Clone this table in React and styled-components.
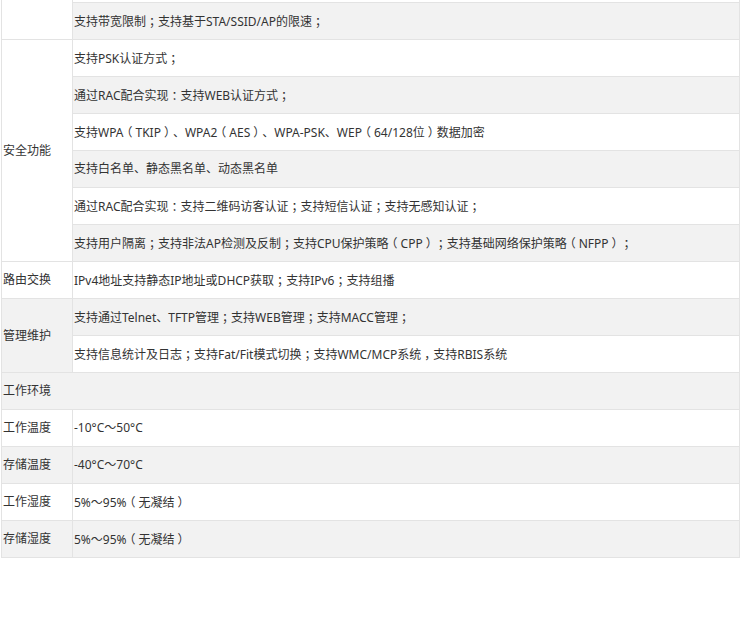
import React from 'react';
import styled, { createGlobalStyle } from 'styled-components';

const Global = createGlobalStyle`
  html, body {
    margin: 0;
    padding: 0;
    background: #fff;
  }
`;

const Page = styled.div`
  padding-left: 1px;
  width: 739px;
`;

const Table = styled.table`
  border-collapse: collapse;
  table-layout: fixed;
  width: 739px;
  font-family: "Noto Sans", "Noto Sans CJK SC", sans-serif;
  font-size: 12px;
  color: #333;
`;

const Row = styled.tr`
  background: ${p => (p.$shade ? '#f2f2f2' : '#fff')};
`;

const Cell = styled.td`
  border: 1px solid #e3e3e3;
  height: 36px;
  padding: 0 1px;
  vertical-align: middle;
  text-align: left;
  white-space: nowrap;
  line-height: 18px;
`;

// the strip of the row above that is scrolled off the top
const TopCell = styled(Cell)`
  border-top: none;
  height: ${p => (p.$thin ? '2px' : 'auto')};
  line-height: 0;
  font-size: 0;
`;

// full-width punctuation sits centred in its em box
const Punct = styled.span`
  display: inline-block;
  width: 1em;
  text-align: center;
  font-family: "Noto Sans CJK SC", sans-serif;
  font-feature-settings: "halt";
`;

function renderText(text) {
  return text.split(/([；：，（）])/).map((part, i) =>
    /^[；：，（）]$/.test(part) ? <Punct key={i}>{part}</Punct> : part
  );
}

const sections = [
  {
    label: '安全功能',
    items: [
      '支持PSK认证方式；',
      '通过RAC配合实现：支持WEB认证方式；',
      '支持WPA（TKIP）、WPA2（AES）、WPA-PSK、WEP（64/128位）数据加密',
      '支持白名单、静态黑名单、动态黑名单',
      '通过RAC配合实现：支持二维码访客认证；支持短信认证；支持无感知认证；',
      '支持用户隔离；支持非法AP检测及反制；支持CPU保护策略（CPP）；支持基础网络保护策略（NFPP）；',
    ],
  },
  { label: '路由交换', items: ['IPv4地址支持静态IP地址或DHCP获取；支持IPv6；支持组播'] },
  {
    label: '管理维护',
    items: [
      '支持通过Telnet、TFTP管理；支持WEB管理；支持MACC管理；',
      '支持信息统计及日志；支持Fat/Fit模式切换；支持WMC/MCP系统，支持RBIS系统',
    ],
  },
  { label: '工作环境', heading: true },
  { label: '工作温度', items: ['-10°C～50°C'] },
  { label: '存储温度', items: ['-40°C～70°C'] },
  { label: '工作湿度', items: ['5%～95%（无凝结）'] },
  { label: '存储湿度', items: ['5%～95%（无凝结）'] },
];

function buildRows() {
  const rows = [];
  let n = 2; // two rows of the previous section sit above
  sections.forEach(sec => {
    if (sec.heading) {
      rows.push(
        <Row key={sec.label} $shade={n % 2 === 1}>
          <Cell colSpan={2}>{sec.label}</Cell>
        </Row>
      );
      n++;
      return;
    }
    sec.items.forEach((text, i) => {
      rows.push(
        <Row key={sec.label + i} $shade={n % 2 === 1}>
          {i === 0 && <Cell rowSpan={sec.items.length}>{sec.label}</Cell>}
          <Cell>{renderText(text)}</Cell>
        </Row>
      );
      n++;
    });
  });
  return rows;
}

export default function App() {
  return (
    <Page>
      <Global />
      <Table>
        <colgroup>
          <col style={{ width: 71 }} />
          <col />
        </colgroup>
        <tbody>
          <Row>
            <TopCell rowSpan={2} />
            <TopCell $thin />
          </Row>
          <Row $shade>
            <Cell>{renderText('支持带宽限制；支持基于STA/SSID/AP的限速；')}</Cell>
          </Row>
          {buildRows()}
        </tbody>
      </Table>
    </Page>
  );
}
